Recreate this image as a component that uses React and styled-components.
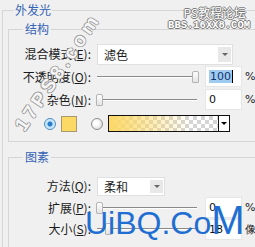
import styled, { createGlobalStyle } from "styled-components";

const GlobalStyle = createGlobalStyle`
  html, body {
    margin: 0;
    padding: 0;
    background: #f0f0f0;
    overflow: hidden;
  }
  body {
    font-family: "Noto Sans CJK SC", "Noto Sans", sans-serif;
    font-size: 12px;
    color: #1b1b1b;
  }
`;

const Page = styled.div`
  position: relative;
  width: 255px;
  height: 247px;
  overflow: hidden;
  background: #f0f0f0;
`;

const Group = styled.fieldset`
  margin: 3px 0 0 2px;
  padding: 0 0 0 5px;
  border: 1px solid #d6d6d6;
  width: 320px;
  min-width: 0;
`;

const Legend = styled.legend`
  margin-left: ${p => p.$indent}px;
  padding: 0 ${p => p.$pad}px;
  line-height: 14px;
  font-size: 12px;
  color: #3563b5;
`;

const Section = styled.fieldset`
  margin: ${p => p.$top}px 0 0 0;
  padding: ${p => p.$padTop}px 0 ${p => p.$padBottom}px 0;
  border: 1px solid #d6d6d6;
  min-width: 0;
`;

const Row = styled.div`
  display: flex;
  align-items: center;
  height: ${p => p.$h}px;
  padding-left: ${p => p.$indent || 0}px;
`;

const Label = styled.span`
  width: 82px;
  flex-shrink: 0;
  margin-right: 6px;
  text-align: right;
  white-space: nowrap;
  line-height: 14px;
`;

const Select = styled.div`
  display: flex;
  align-items: center;
  justify-content: space-between;
  box-sizing: border-box;
  width: ${p => p.$w}px;
  height: ${p => p.$h}px;
  padding-left: 6px;
  background: #fff;
  border: 1px solid #e0e0e0;
`;

const SelectArrow = styled.span`
  display: flex;
  align-items: center;
  justify-content: center;
  width: 13px;
  align-self: stretch;
  margin: 2px 1px 2px 0;
  background: #e8e8e8;
  &::after {
    content: "";
    border-left: 3px solid transparent;
    border-right: 3px solid transparent;
    border-top: 3px solid #666;
  }
`;

const Slider = styled.div`
  position: relative;
  width: 100px;
  height: 12px;
  flex-shrink: 0;
`;

const Track = styled.div`
  position: absolute;
  left: 0;
  right: 0;
  top: 5px;
  height: 1px;
  background: #8a8a8a;
  border-bottom: 1px solid #fff;
`;

const Thumb = styled.div`
  position: absolute;
  top: 0;
  width: 5px;
  height: 10px;
  background: linear-gradient(#fdfdfd, #e4e4e4);
  border: 1px solid #b4b4b4;
  border-radius: 2px 2px 1px 1px;
`;

const NumBox = styled.div`
  display: flex;
  align-items: center;
  box-sizing: border-box;
  width: 37px;
  height: 21px;
  margin-left: 8px;
  padding-left: 3px;
  background: #fff;
  border: 1px solid #e6e6e6;
  font-family: "DejaVu Sans", sans-serif;
  font-size: 11px;
  color: #111;
`;

const Selected = styled.span`
  background: #9fcbf1;
  color: #12346e;
  padding: 0 1px;
  border-right: 1px solid #000;
`;

const Unit = styled.span`
  margin-left: 3px;
  font-family: "DejaVu Sans", sans-serif;
  font-size: 11px;
`;

const Radio = styled.span`
  box-sizing: border-box;
  width: 12px;
  height: 12px;
  border-radius: 50%;
  flex-shrink: 0;
  border: 1px solid ${p => (p.$on ? "#4a8cc0" : "#8e8f8f")};
  background: ${p =>
    p.$on
      ? "radial-gradient(circle, #2a7cc8 0 2px, #bfe2f7 3px, #eaf6fd 100%)"
      : "radial-gradient(circle at 40% 40%, #fff 0 2px, #cfcfcf 100%)"};
`;

const Swatch = styled.span`
  box-sizing: border-box;
  width: 16px;
  height: 16px;
  margin-left: 5px;
  background: #fcd865;
  border: 1px solid #a89a70;
`;

const GradientBox = styled.div`
  display: flex;
  box-sizing: border-box;
  width: 122px;
  height: 17px;
  margin-left: 5px;
  border: 1px solid #111;
`;

const GradientFill = styled.div`
  flex: 1;
  background:
    linear-gradient(to right, #fcd865 0%, rgba(252, 216, 101, 0.55) 35%, rgba(252, 216, 101, 0) 75%),
    conic-gradient(#d4d4d4 25%, #fff 0 50%, #d4d4d4 0 75%, #fff 0) 0 0 / 8px 8px;
`;

const GradientArrow = styled.div`
  display: flex;
  align-items: center;
  justify-content: center;
  width: 10px;
  background: #fff;
  border-left: 1px solid #111;
  &::after {
    content: "";
    border-left: 3px solid transparent;
    border-right: 3px solid transparent;
    border-top: 3px solid #000;
  }
`;

const Spacer = styled.span`
  width: ${p => p.$w}px;
  flex-shrink: 0;
`;

const SiteMark = styled.div`
  position: absolute;
  top: 6px;
  right: 9px;
  text-align: right;
  color: #fff;
  text-shadow: 1px 0 0 #7a7a7a, -1px 0 0 #7a7a7a, 0 1px 0 #7a7a7a, 0 -1px 0 #7a7a7a;
`;

const SiteName = styled.div`
  font-size: 12px;
  line-height: 13px;
`;

const SiteUrl = styled.div`
  margin-top: 1px;
  margin-right: -4px;
  font-family: "Liberation Mono", monospace;
  font-size: 10.5px;
  font-weight: bold;
  line-height: 11px;
`;

const DiagonalMark = styled.div`
  position: absolute;
  left: 58px;
  top: 72px;
  transform: translate(-50%, -50%) rotate(-56deg);
  font-family: "Liberation Sans", sans-serif;
  font-weight: bold;
  font-size: 19px;
  letter-spacing: 4px;
  color: #f6f6f6;
  text-shadow: 1px 0 0 #9a9a9a, -1px 0 0 #9a9a9a, 0 1px 0 #9a9a9a, 0 -1px 0 #9a9a9a;
  white-space: nowrap;
`;

const BigMark = styled.div`
  position: absolute;
  left: 85px;
  top: 200px;
  font-family: "Liberation Sans", sans-serif;
  font-size: 32px;
  line-height: 40px;
  color: #1f6fd3;
  white-space: nowrap;
`;

const BigLetter = styled.span`
  font-size: 40px;
`;

function SliderRow({ label, thumb, value, selected, unit, h }) {
  return (
    <Row $h={h}>
      <Label>{label}</Label>
      <Slider>
        <Track />
        <Thumb style={{ left: `${thumb}px` }} />
      </Slider>
      <NumBox>{selected ? <Selected>{value}</Selected> : value}</NumBox>
      <Unit>{unit}</Unit>
    </Row>
  );
}

export default function App() {
  return (
    <Page>
      <GlobalStyle />
      <Group>
        <Legend $indent={6} $pad={1}>外发光</Legend>
        <Section $top={5} $padTop={7} $padBottom={5}>
          <Legend $indent={14} $pad={2}>结构</Legend>
          <Row $h={22}>
            <Label>混合模式(<u>E</u>):</Label>
            <Select $w={136} $h={21}>
              滤色
              <SelectArrow />
            </Select>
          </Row>
          <SliderRow h={23} label={<>不透明度(<u>O</u>):</>} thumb={95} value="100" selected unit="%" />
          <SliderRow h={23} label={<>杂色(<u>N</u>):</>} thumb={-1} value="0" unit="%" />
          <Row $h={25} $indent={35}>
            <Radio $on />
            <Swatch />
            <Spacer $w={14} />
            <Radio />
            <GradientBox>
              <GradientFill />
              <GradientArrow />
            </GradientBox>
          </Row>
        </Section>
        <Section $top={8} $padTop={11} $padBottom={10}>
          <Legend $indent={14} $pad={2}>图素</Legend>
          <Row $h={22}>
            <Label>方法(<u>Q</u>):</Label>
            <Select $w={68} $h={19}>
              柔和
              <SelectArrow />
            </Select>
          </Row>
          <SliderRow h={21} label={<>扩展(<u>P</u>):</>} thumb={-1} value="0" unit="%" />
          <SliderRow h={22} label={<>大小(<u>S</u>):</>} thumb={8} value="18" unit="像" />
        </Section>
      </Group>
      <SiteMark>
        <SiteName>PS教程论坛</SiteName>
        <SiteUrl>BBS.16XX8.COM</SiteUrl>
      </SiteMark>
      <DiagonalMark>17PS8.com</DiagonalMark>
      <BigMark>
        UiBQ.Co<BigLetter>M</BigLetter>
      </BigMark>
    </Page>
  );
}
